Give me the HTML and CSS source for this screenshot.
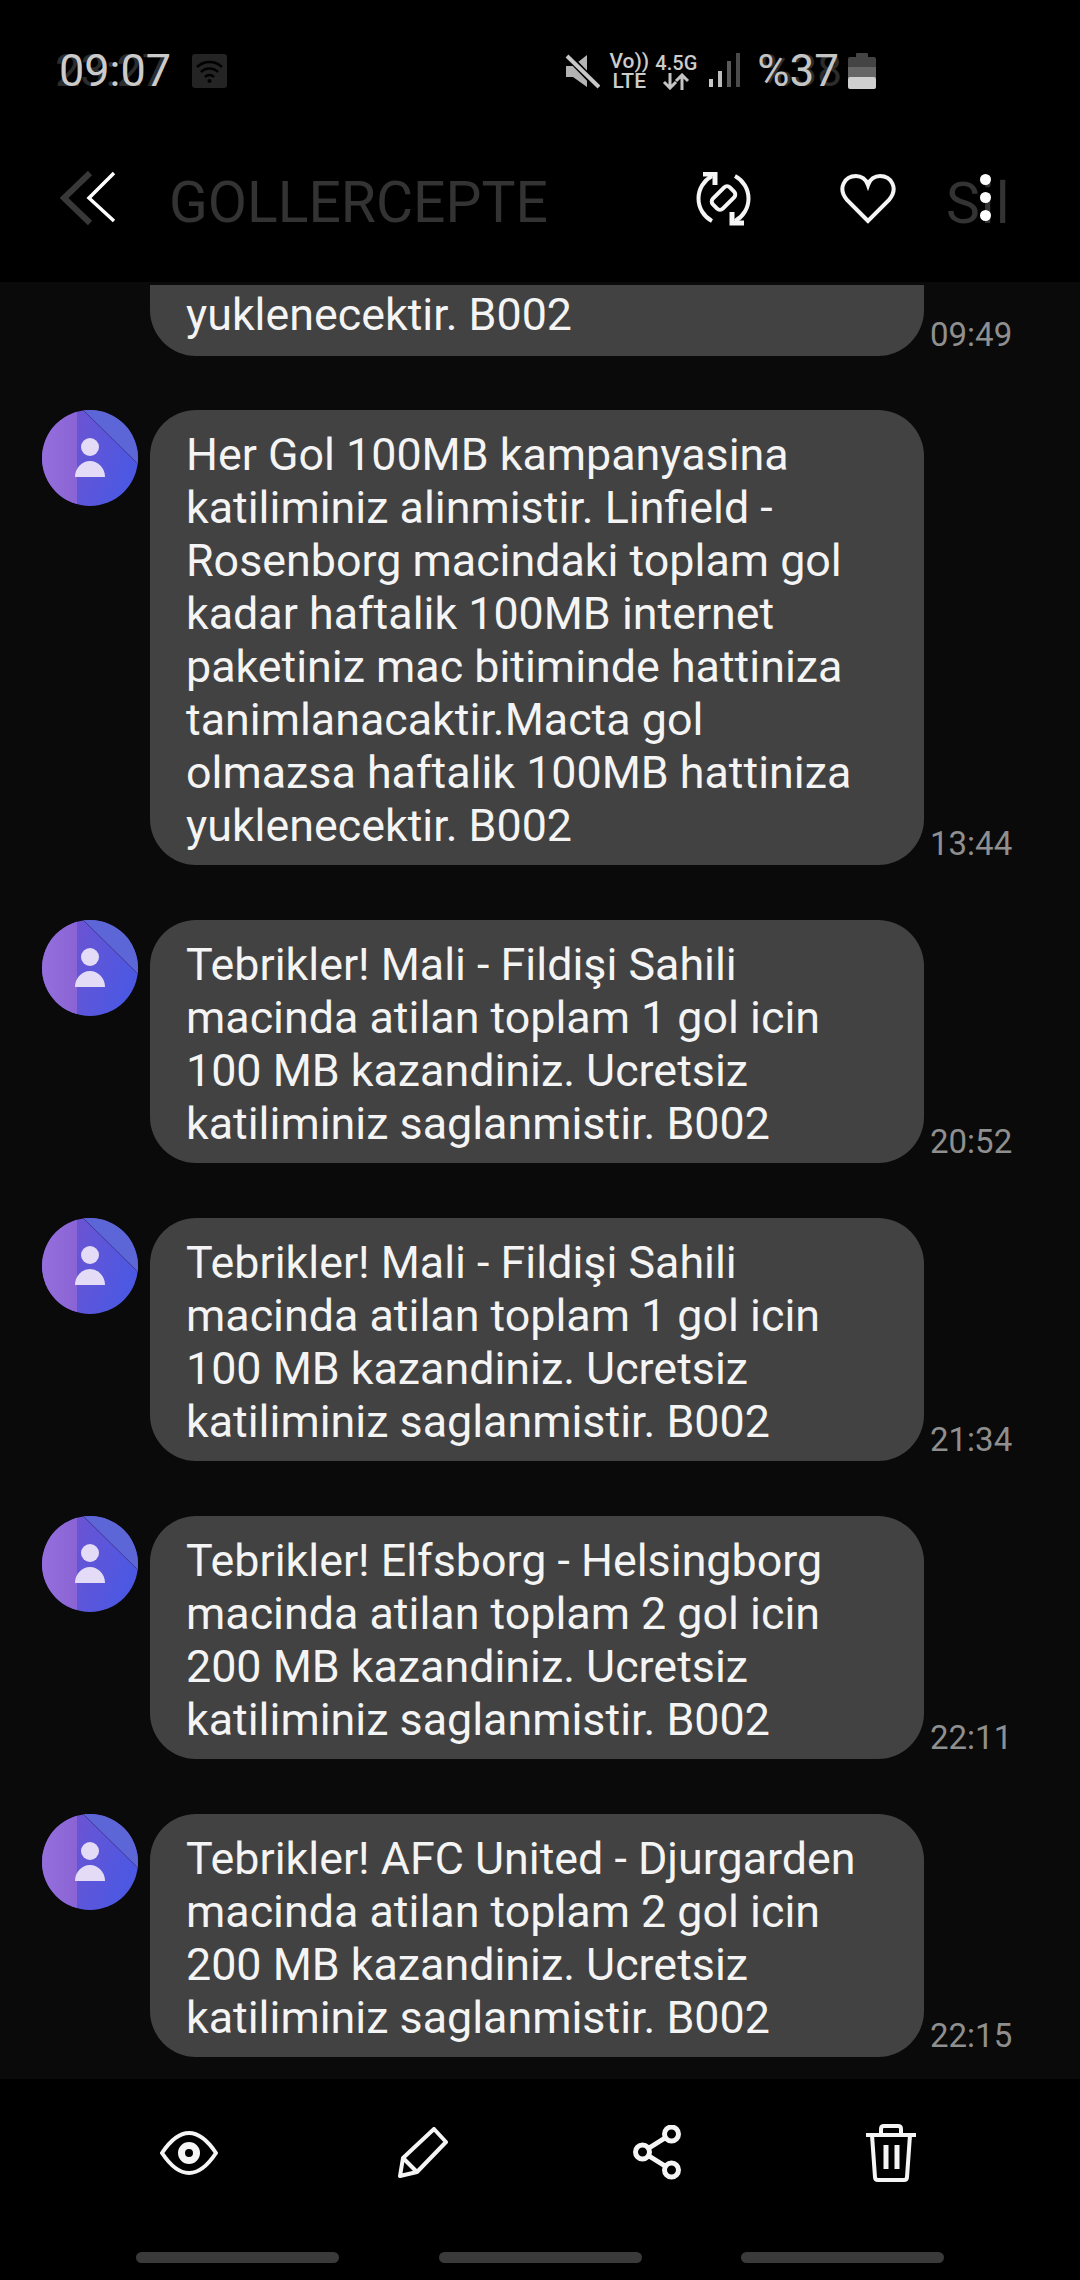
FILE: index.html
```html
<!DOCTYPE html>
<html lang="en">
<head>
    <meta charset="UTF-8">
    <meta name="viewport" content="width=device-width, initial-scale=1.0">
    <title>GOLLERCEPTE</title>
    <link rel="stylesheet" href="styles.css">
</head>
<body>
    <svg class="defs" width="0" height="0">
        <defs>
            <linearGradient id="avatarMain" x1="0" y1="0" x2="1" y2="0.35">
                <stop offset="0" stop-color="#7a52cb"/>
                <stop offset="1" stop-color="#4d58e2"/>
            </linearGradient>
            <linearGradient id="avatarLeft" x1="0" y1="0" x2="1" y2="0">
                <stop offset="0" stop-color="#946fdc"/>
                <stop offset="1" stop-color="#8a64d4"/>
            </linearGradient>
            <clipPath id="avatarClip"><circle cx="48" cy="48" r="48"/></clipPath>
            <symbol id="avatar" viewBox="0 0 96 96">
                <g clip-path="url(#avatarClip)">
                    <rect width="96" height="96" fill="url(#avatarMain)"/>
                    <rect width="35" height="96" fill="url(#avatarLeft)"/>
                    <polygon points="41,0 96,54 96,0" fill="#5d66d6"/>
                    <line x1="41" y1="0" x2="96" y2="54" stroke="#43389a" stroke-width="1"/>
                </g>
                <circle cx="48" cy="37" r="9" fill="#e4dcf6"/>
                <path d="M33 67a15 16 0 0 1 30 0z" fill="#e4dcf6"/>
            </symbol>
        </defs>
    </svg>

    <!-- Status bar -->
    <div class="status-bar">
        <div class="status-left">
            <span class="clock"><span class="ghost ghost-clock">23:27</span>09:07</span>
            <span class="wifi-box">
                <svg width="35" height="34" viewBox="0 0 35 34" fill="none" stroke="#000" stroke-width="2.5">
                    <path d="M5 13a18 18 0 0 1 25 0"/>
                    <path d="M9 18a12 12 0 0 1 17 0"/>
                    <path d="M13 23a6 6 0 0 1 9 0"/>
                    <circle cx="17.500" cy="27" r="2" fill="#000" stroke="none"/>
                </svg>
            </span>
        </div>
        <div class="status-right">
            <svg class="mute-icon" width="36" height="36" viewBox="0 0 36 36">
                <path d="M2 13h7L23 2v32L9 24H2z" fill="#b4b4b4"/>
                <line x1="3" y1="2" x2="33" y2="33" stroke="#000" stroke-width="7"/>
                <line x1="3" y1="3" x2="35" y2="34" stroke="#c8c8c8" stroke-width="4"/>
            </svg>
            <span class="net-stack net-volte"><b>Vo))</b><b>LTE</b></span>
            <span class="net-stack net-data">
                <b>4.5G</b>
                <svg width="28" height="17" viewBox="0 0 28 17" fill="none" stroke="#c4c4c4" stroke-width="3">
                    <path d="M8 0v15M2 9l6 6 6-6"/>
                    <path d="M20 17V2M14 8l6-6 6 6"/>
                </svg>
            </span>
            <svg class="signal-icon" width="32" height="36" viewBox="0 0 32 36">
                <rect x="0" y="26" width="4" height="8" fill="#c8c8c8"/>
                <rect x="9" y="18" width="4" height="16" fill="#bdbdbd"/>
                <rect x="18" y="8" width="4" height="26" fill="#5a5a5a"/>
                <rect x="27" y="0" width="4" height="34" fill="#4a4a4a"/>
            </svg>
            <span class="battery-pct"><span class="ghost ghost-pct">%38</span>%37</span>
            <svg class="battery-icon" width="28" height="36" viewBox="0 0 28 36">
                <rect x="8" y="0" width="12" height="6" rx="1" fill="#444"/>
                <rect x="0" y="4" width="28" height="11" rx="2" fill="#444"/>
                <rect x="0" y="14" width="28" height="11" fill="#666"/>
                <rect x="0" y="24" width="28" height="12" rx="2" fill="#cfcfcf"/>
            </svg>
        </div>
    </div>

    <!-- Conversation header -->
    <div class="app-bar">
        <svg class="back-icon" width="60" height="56" viewBox="0 0 60 56" fill="none">
            <polyline points="31,2 5,27 31,52" stroke="#383838" stroke-width="6"/>
            <polyline points="55,2 30,27 55,50" stroke="#fff" stroke-width="3.5"/>
        </svg>
        <h1 class="contact-name">GOLLERCEPTE</h1>
        <svg class="sync-icon" width="56" height="54" viewBox="0 0 56 54" fill="none" stroke="#f5f5f5" stroke-width="4">
            <path d="M16 4A25.500 25.500 0 0 0 16 49"/>
            <path d="M39 4A25.500 25.500 0 0 1 39 49"/>
            <polyline points="7,2 19,2 19,13" stroke-width="5"/>
            <polyline points="36,40 36,51 48,51" stroke-width="5"/>
            <rect x="15.500" y="19" width="24" height="14" rx="4" transform="rotate(-45 27.500 26)"/>
        </svg>
        <svg class="heart-icon" width="56" height="50" viewBox="0 0 56 50" fill="none" stroke="#f5f5f5" stroke-width="4">
            <path d="M28 47 7 26C-3 14 5 2 16 2c5 0 10 3 12 9 2-6 7-9 12-9 11 0 19 12 9 24z"/>
        </svg>
        <div class="more-wrap">
            <span class="ghost-delete">Sil</span>
            <span class="more-dots"><i></i><i></i><i></i></span>
        </div>
    </div>

    <!-- Messages -->
    <div class="thread">
        <div class="message">
            <span class="avatar-slot"></span>
            <div class="bubble bubble-cut">yuklenecektir. B002</div>
            <span class="msg-time">09:49</span>
        </div>
        <div class="message">
            <svg class="avatar"><use href="#avatar"/></svg>
            <div class="bubble">Her Gol 100MB kampanyasina katiliminiz alinmistir. Linfield - Rosenborg macindaki toplam gol kadar haftalik 100MB internet paketiniz mac bitiminde hattiniza tanimlanacaktir.Macta gol olmazsa haftalik 100MB hattiniza yuklenecektir. B002</div>
            <span class="msg-time">13:44</span>
        </div>
        <div class="message">
            <svg class="avatar"><use href="#avatar"/></svg>
            <div class="bubble">Tebrikler! Mali - Fildişi Sahili macinda atilan toplam 1 gol icin 100 MB kazandiniz. Ucretsiz katiliminiz saglanmistir. B002</div>
            <span class="msg-time">20:52</span>
        </div>
        <div class="message">
            <svg class="avatar"><use href="#avatar"/></svg>
            <div class="bubble">Tebrikler! Mali - Fildişi Sahili macinda atilan toplam 1 gol icin 100 MB kazandiniz. Ucretsiz katiliminiz saglanmistir. B002</div>
            <span class="msg-time">21:34</span>
        </div>
        <div class="message">
            <svg class="avatar"><use href="#avatar"/></svg>
            <div class="bubble">Tebrikler! Elfsborg - Helsingborg macinda atilan toplam 2 gol icin 200 MB kazandiniz. Ucretsiz katiliminiz saglanmistir. B002</div>
            <span class="msg-time">22:11</span>
        </div>
        <div class="message">
            <svg class="avatar"><use href="#avatar"/></svg>
            <div class="bubble">Tebrikler! AFC United - Djurgarden macinda atilan toplam 2 gol icin 200 MB kazandiniz. Ucretsiz katiliminiz saglanmistir. B002</div>
            <span class="msg-time">22:15</span>
        </div>
    </div>

    <!-- Bottom actions -->
    <div class="action-bar">
        <svg width="58" height="44" viewBox="0 0 58 44" fill="none" stroke="#f5f5f5" stroke-width="4">
            <path d="M2 22C12 7 20 2 29 2s17 5 27 20C46 37 38 42 29 42S12 37 2 22z"/>
            <circle cx="29" cy="22" r="7.500" stroke-width="7"/>
        </svg>
        <svg width="52" height="52" viewBox="0 0 52 52" fill="none" stroke="#f5f5f5" stroke-width="4" stroke-linejoin="round">
            <path d="M3 49 6 31 37 2 49 15 20 45z"/>
            <path d="M6 31 20 45"/>
        </svg>
        <svg width="48" height="56" viewBox="0 0 48 56" fill="none" stroke="#f5f5f5" stroke-width="5">
            <circle cx="38.500" cy="9" r="7"/>
            <circle cx="9.500" cy="27" r="7"/>
            <circle cx="38.500" cy="45" r="7"/>
            <path d="M16 23 32 13M16 31 32 41"/>
        </svg>
        <svg width="50" height="58" viewBox="0 0 50 58" fill="none" stroke="#f5f5f5" stroke-width="4">
            <path d="M0 11h50"/>
            <path d="M15 11V5q0-3 3-3h14q3 0 3 3v6"/>
            <path d="M6 11l3 42q0 3 3 3h26q3 0 3-3l3-42"/>
            <path d="M20 21v24M31 21v24" stroke-width="5"/>
        </svg>
    </div>

    <div class="nav-hints">
        <span></span>
        <span></span>
        <span></span>
    </div>
</body>
</html>
```

FILE: styles.css
```css
* {
    box-sizing: border-box;
}

body {
    font-family: Roboto, "Liberation Sans", sans-serif;
    margin: 0;
    padding: 0;
    width: 1080px;
    height: 2280px;
    overflow: hidden;
    display: flex;
    flex-direction: column;
    background-color: #000;
    color: #fff;
}

.defs {
    position: absolute;
}

/* Status bar */
.status-bar {
    height: 142px;
    flex-shrink: 0;
    padding: 0 204px 0 59px;
    display: flex;
    justify-content: space-between;
    align-items: center;
}

.status-left {
    display: flex;
    align-items: center;
    gap: 21px;
}

.status-right {
    display: flex;
    align-items: center;
}

.clock {
    position: relative;
    font-size: 45px;
    line-height: 46px;
    color: #cbcbcb;
}

.ghost {
    position: absolute;
    top: 0;
    color: #2c2c2c;
    z-index: -1;
}

.ghost-clock {
    left: -4px;
}

.ghost-pct {
    left: 3px;
}

.wifi-box {
    width: 35px;
    height: 34px;
    border-radius: 3px;
    background-color: #242424;
    display: flex;
}

.net-stack {
    display: flex;
    flex-direction: column;
    align-items: center;
    line-height: 20px;
    color: #ccc;
}

.net-stack b {
    font-weight: 500;
    font-size: 21px;
    white-space: nowrap;
}

.net-volte {
    margin-left: 9px;
    width: 40px;
}

.net-data {
    margin-left: 8px;
    width: 38px;
}

.net-data b {
    font-size: 20px;
}

.signal-icon {
    margin-left: 14px;
}

.battery-pct {
    position: relative;
    margin-left: 16px;
    font-size: 44px;
    line-height: 46px;
    color: #c4c4c4;
}

.battery-icon {
    margin-left: 9px;
}

/* Header */
.app-bar {
    height: 140px;
    flex-shrink: 0;
    padding: 0 0 26px 59px;
    display: flex;
    align-items: center;
}

.contact-name {
    margin: 6px 0 0 50px;
    width: 527px;
    font-size: 57px;
    font-weight: 400;
    color: #333;
    white-space: nowrap;
}

.heart-icon {
    margin-left: 88px;
}

.more-wrap {
    position: relative;
    margin-left: 54px;
    width: 56px;
    height: 54px;
}

.ghost-delete {
    display: block;
    margin: 5px 0 0 -4px;
    font-size: 57px;
    line-height: 54px;
    letter-spacing: 1px;
    color: #333;
}

.more-dots {
    position: absolute;
    left: 30px;
    top: 2px;
    display: flex;
    flex-direction: column;
    gap: 7px;
}

.more-dots i {
    width: 11px;
    height: 11px;
    border-radius: 50%;
    background-color: #fff;
}

/* Messages */
.thread {
    height: 1797px;
    flex-shrink: 0;
    padding: 3px 0 0 42px;
    overflow: hidden;
    background-color: #0a0a0a;
    display: flex;
    flex-direction: column;
    gap: 54px;
}

.message {
    display: flex;
    align-items: flex-start;
}

.message + .message + .message {
    margin-top: 1px;
}

.avatar,
.avatar-slot {
    width: 96px;
    height: 96px;
    flex-shrink: 0;
    margin-right: 12px;
}

.avatar-slot {
    height: 0;
}

.bubble {
    width: 774px;
    padding: 18px 52px 13px 36px;
    border-radius: 46px;
    background-color: #424242;
    font-size: 44.8px;
    line-height: 53px;
    color: #f4f4f4;
}

.bubble-cut {
    padding-top: 3px;
    padding-bottom: 15px;
    border-top-left-radius: 0;
    border-top-right-radius: 0;
}

.msg-time {
    align-self: flex-end;
    margin-left: 6px;
    padding-bottom: 4px;
    font-size: 33px;
    line-height: 34px;
    color: #8f8f8f;
}

/* Bottom actions */
.action-bar {
    height: 173px;
    flex-shrink: 0;
    padding: 0 0 26px 72px;
    display: grid;
    grid-template-columns: repeat(4, 234px);
    justify-items: center;
    align-items: center;
}

.nav-hints {
    padding: 0 136px;
    display: flex;
    justify-content: space-between;
}

.nav-hints span {
    width: 203px;
    height: 11px;
    border-radius: 6px;
    background-color: #3a3a3a;
}
```
